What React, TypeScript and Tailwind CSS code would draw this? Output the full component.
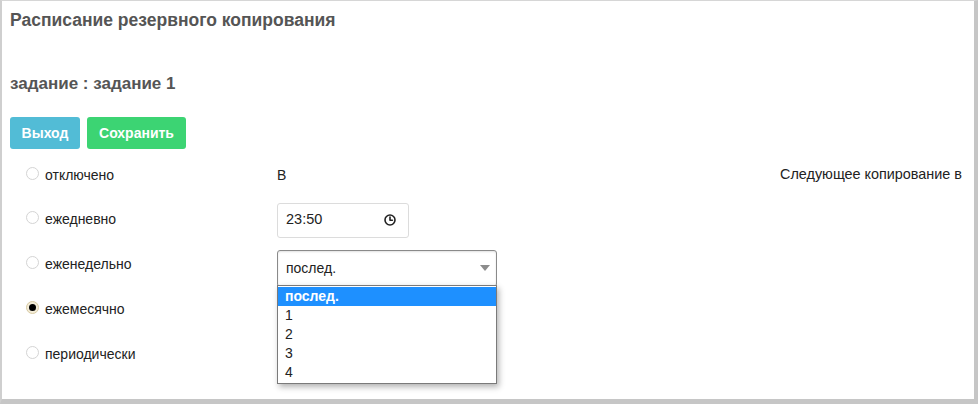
import React from "react";

const font = { fontFamily: '"Liberation Sans", Arial, sans-serif' };

function Radio({ checked }: { checked?: boolean }) {
  return checked ? (
    <span className="inline-flex h-[13px] w-[13px] items-center justify-center rounded-full border border-[#d8cba4] bg-[#f3ecd8]">
      <span className="h-[7px] w-[7px] rounded-full bg-black" />
    </span>
  ) : (
    <span className="inline-block h-[13px] w-[13px] rounded-full border border-[#d4d4d4] bg-white" />
  );
}

function RadioLabel({ label, checked }: { label: string; checked?: boolean }) {
  return (
    <div className="flex w-[275px] shrink-0 items-center gap-[6px] pl-[24px]">
      <span className="-mt-[4px] flex">
        <Radio checked={checked} />
      </span>
      <span className="text-[14px] text-[#222]">{label}</span>
    </div>
  );
}

export default function App() {
  return (
    <div
      style={font}
      className="h-[404px] w-[978px] overflow-hidden border-b-[5px] border-l-2 border-r-4 border-t border-b-[#c6c6c6] border-l-[#cfcfcf] border-r-[#c6c6c6] border-t-[#d6d6d6] bg-white"
    >
      <div className="pl-2 pt-[10px]">
        <h1 className="text-[17.5px] font-bold leading-[19px] text-[#555]">
          Расписание резервного копирования
        </h1>
        <h2 className="mt-[44px] text-[17px] font-bold leading-[19px] text-[#555]">
          задание : задание 1
        </h2>
        <div className="mt-[24px] flex gap-[7px]">
          <button className="h-[32px] w-[70px] rounded-[3px] bg-[#52bcd6] text-[14px] font-bold text-white">
            Выход
          </button>
          <button className="h-[32px] w-[99px] rounded-[3px] bg-[#3cd473] text-[14px] font-bold text-white">
            Сохранить
          </button>
        </div>
      </div>

      <div className="relative mt-[4px] pr-[12px]">
        {/* row 1 */}
        <div className="flex h-[44px] items-center">
          <RadioLabel label="отключено" />
          <span className="text-[14px] text-[#222]">В</span>
          <span className="ml-auto text-[14.4px] text-[#222]">Следующее копирование в</span>
        </div>
        {/* row 2 */}
        <div className="flex h-[44px] items-center">
          <RadioLabel label="ежедневно" />
          <div className="mt-[2px] flex h-[35px] w-[132px] items-center justify-between rounded-[3px] border border-[#dcdcdc] pl-[8px] pr-[12px]">
            <span className="text-[14.5px] text-[#222]">23:50</span>
            <svg width="12" height="12" viewBox="0 0 12 12" fill="none" stroke="#222" strokeWidth="1.6">
              <circle cx="6" cy="6" r="5" />
              <path d="M6 3v3.2h2.4" strokeLinecap="round" strokeLinejoin="round" />
            </svg>
          </div>
        </div>
        {/* row 3 */}
        <div className="flex h-[46px] items-center">
          <RadioLabel label="еженедельно" />
          <div className="relative mt-[8px]">
            <div className="flex h-[37px] w-[220px] items-center justify-between rounded-[3px] border border-[#8a8a8a] pl-[8px] pr-[6px] shadow-[inset_0_1px_2px_rgba(0,0,0,0.12)]">
              <span className="text-[14px] text-[#222]">послед.</span>
              <svg width="10" height="6" viewBox="0 0 10 6">
                <path d="M0 0h10L5 6z" fill="#8c8c8c" />
              </svg>
            </div>
            <div className="absolute left-0 top-[35px] z-10 w-[220px] border border-[#7a7a7a] bg-white py-[1px] shadow-[2px_3px_6px_rgba(0,0,0,0.3)]">
              <div className="flex h-[19px] items-center bg-[#1e90ff] pl-[7px] text-[14px] font-semibold text-white">
                послед.
              </div>
              {["1", "2", "3", "4"].map((n) => (
                <div key={n} className="flex h-[19px] items-center pl-[7px] text-[14px] text-[#222]">
                  {n}
                </div>
              ))}
            </div>
          </div>
        </div>
        {/* row 4 */}
        <div className="flex h-[45px] items-center">
          <RadioLabel label="ежемесячно" checked />
        </div>
        {/* row 5 */}
        <div className="flex h-[45px] items-center">
          <RadioLabel label="периодически" />
        </div>
      </div>
    </div>
  );
}
